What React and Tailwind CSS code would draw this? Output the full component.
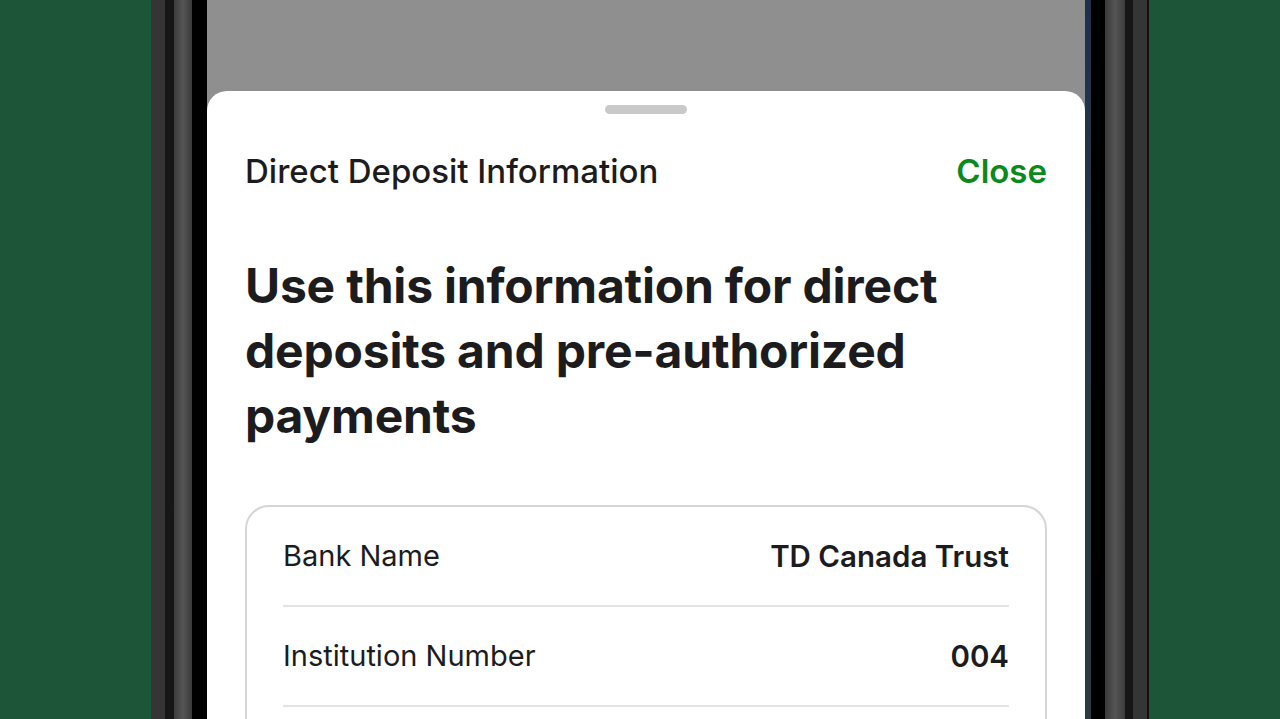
import React from "react";

const rows = [
  { label: "Bank Name", value: "TD Canada Trust" },
  { label: "Institution Number", value: "004" },
];

function FrameLeft() {
  return (
    <div className="flex h-full shrink-0">
      <div className="w-[14px] bg-[#353535]" />
      <div className="w-[9px] bg-[#161616]" />
      <div className="w-[18px] bg-gradient-to-r from-[#3c3c3c] via-[#555555] to-[#3a3a3a]" />
      <div className="w-[15px] bg-black" />
    </div>
  );
}

function FrameRight() {
  return (
    <div className="flex h-full shrink-0">
      <div className="w-[14px] bg-black" />
      <div className="w-[20px] bg-gradient-to-r from-[#3a3a3a] via-[#555555] to-[#3c3c3c]" />
      <div className="w-[8px] bg-[#161616]" />
      <div className="w-[14px] bg-[#353535]" />
      <div className="w-[2px] bg-[#111111]" />
    </div>
  );
}

function InfoRow({ label, value }) {
  return (
    <div className="flex h-[100px] items-center justify-between border-b-2 border-[#e3e3e3]">
      <span className="text-[29px] font-normal text-[#1c1c1e]">{label}</span>
      <span className="text-[29.5px] font-semibold text-[#1c1c1e]">{value}</span>
    </div>
  );
}

export default function App() {
  return (
    <div
      className="flex h-[719px] w-full justify-center overflow-hidden bg-[#1d5538]"
      style={{ fontFamily: "Inter, 'Noto Sans', sans-serif" }}
    >
      <div className="ml-[20px] flex h-full">
        <FrameLeft />

        {/* screen */}
        <div className="flex h-full w-[884px]">
          <div className="flex h-full w-[878px] flex-col overflow-hidden bg-[#8f8f8f]">
            <div className="mt-[91px] flex-1 rounded-t-[20px] bg-white px-[38px]">
              <div className="flex justify-center pt-[14px]">
                <div className="h-[9px] w-[82px] rounded-full bg-[#c9c9c9]" />
              </div>

              <div className="mt-[38px] flex h-[40px] items-center justify-between">
                <h2 className="text-[33px] font-medium text-[#1c1c1e]">
                  Direct Deposit Information
                </h2>
                <button className="text-[33px] font-semibold text-[#0a8a1d]">Close</button>
              </div>

              <h1 className="mt-[61px] max-w-[760px] text-[48px] font-bold leading-[65px] tracking-[-0.2px] text-[#1c1c1e]">
                Use this information for direct deposits and pre-authorized payments
              </h1>

              <div className="mt-[57px] rounded-[24px] border-2 border-[#d6d6d6] px-[36px] pb-[80px]">
                {rows.map((r) => (
                  <InfoRow key={r.label} label={r.label} value={r.value} />
                ))}
              </div>
            </div>
          </div>
          <div className="h-full w-[6px] bg-gradient-to-b from-[#1f2f4a] via-[#2a3a42] to-[#2b3b40]" />
        </div>

        <FrameRight />
      </div>
    </div>
  );
}
